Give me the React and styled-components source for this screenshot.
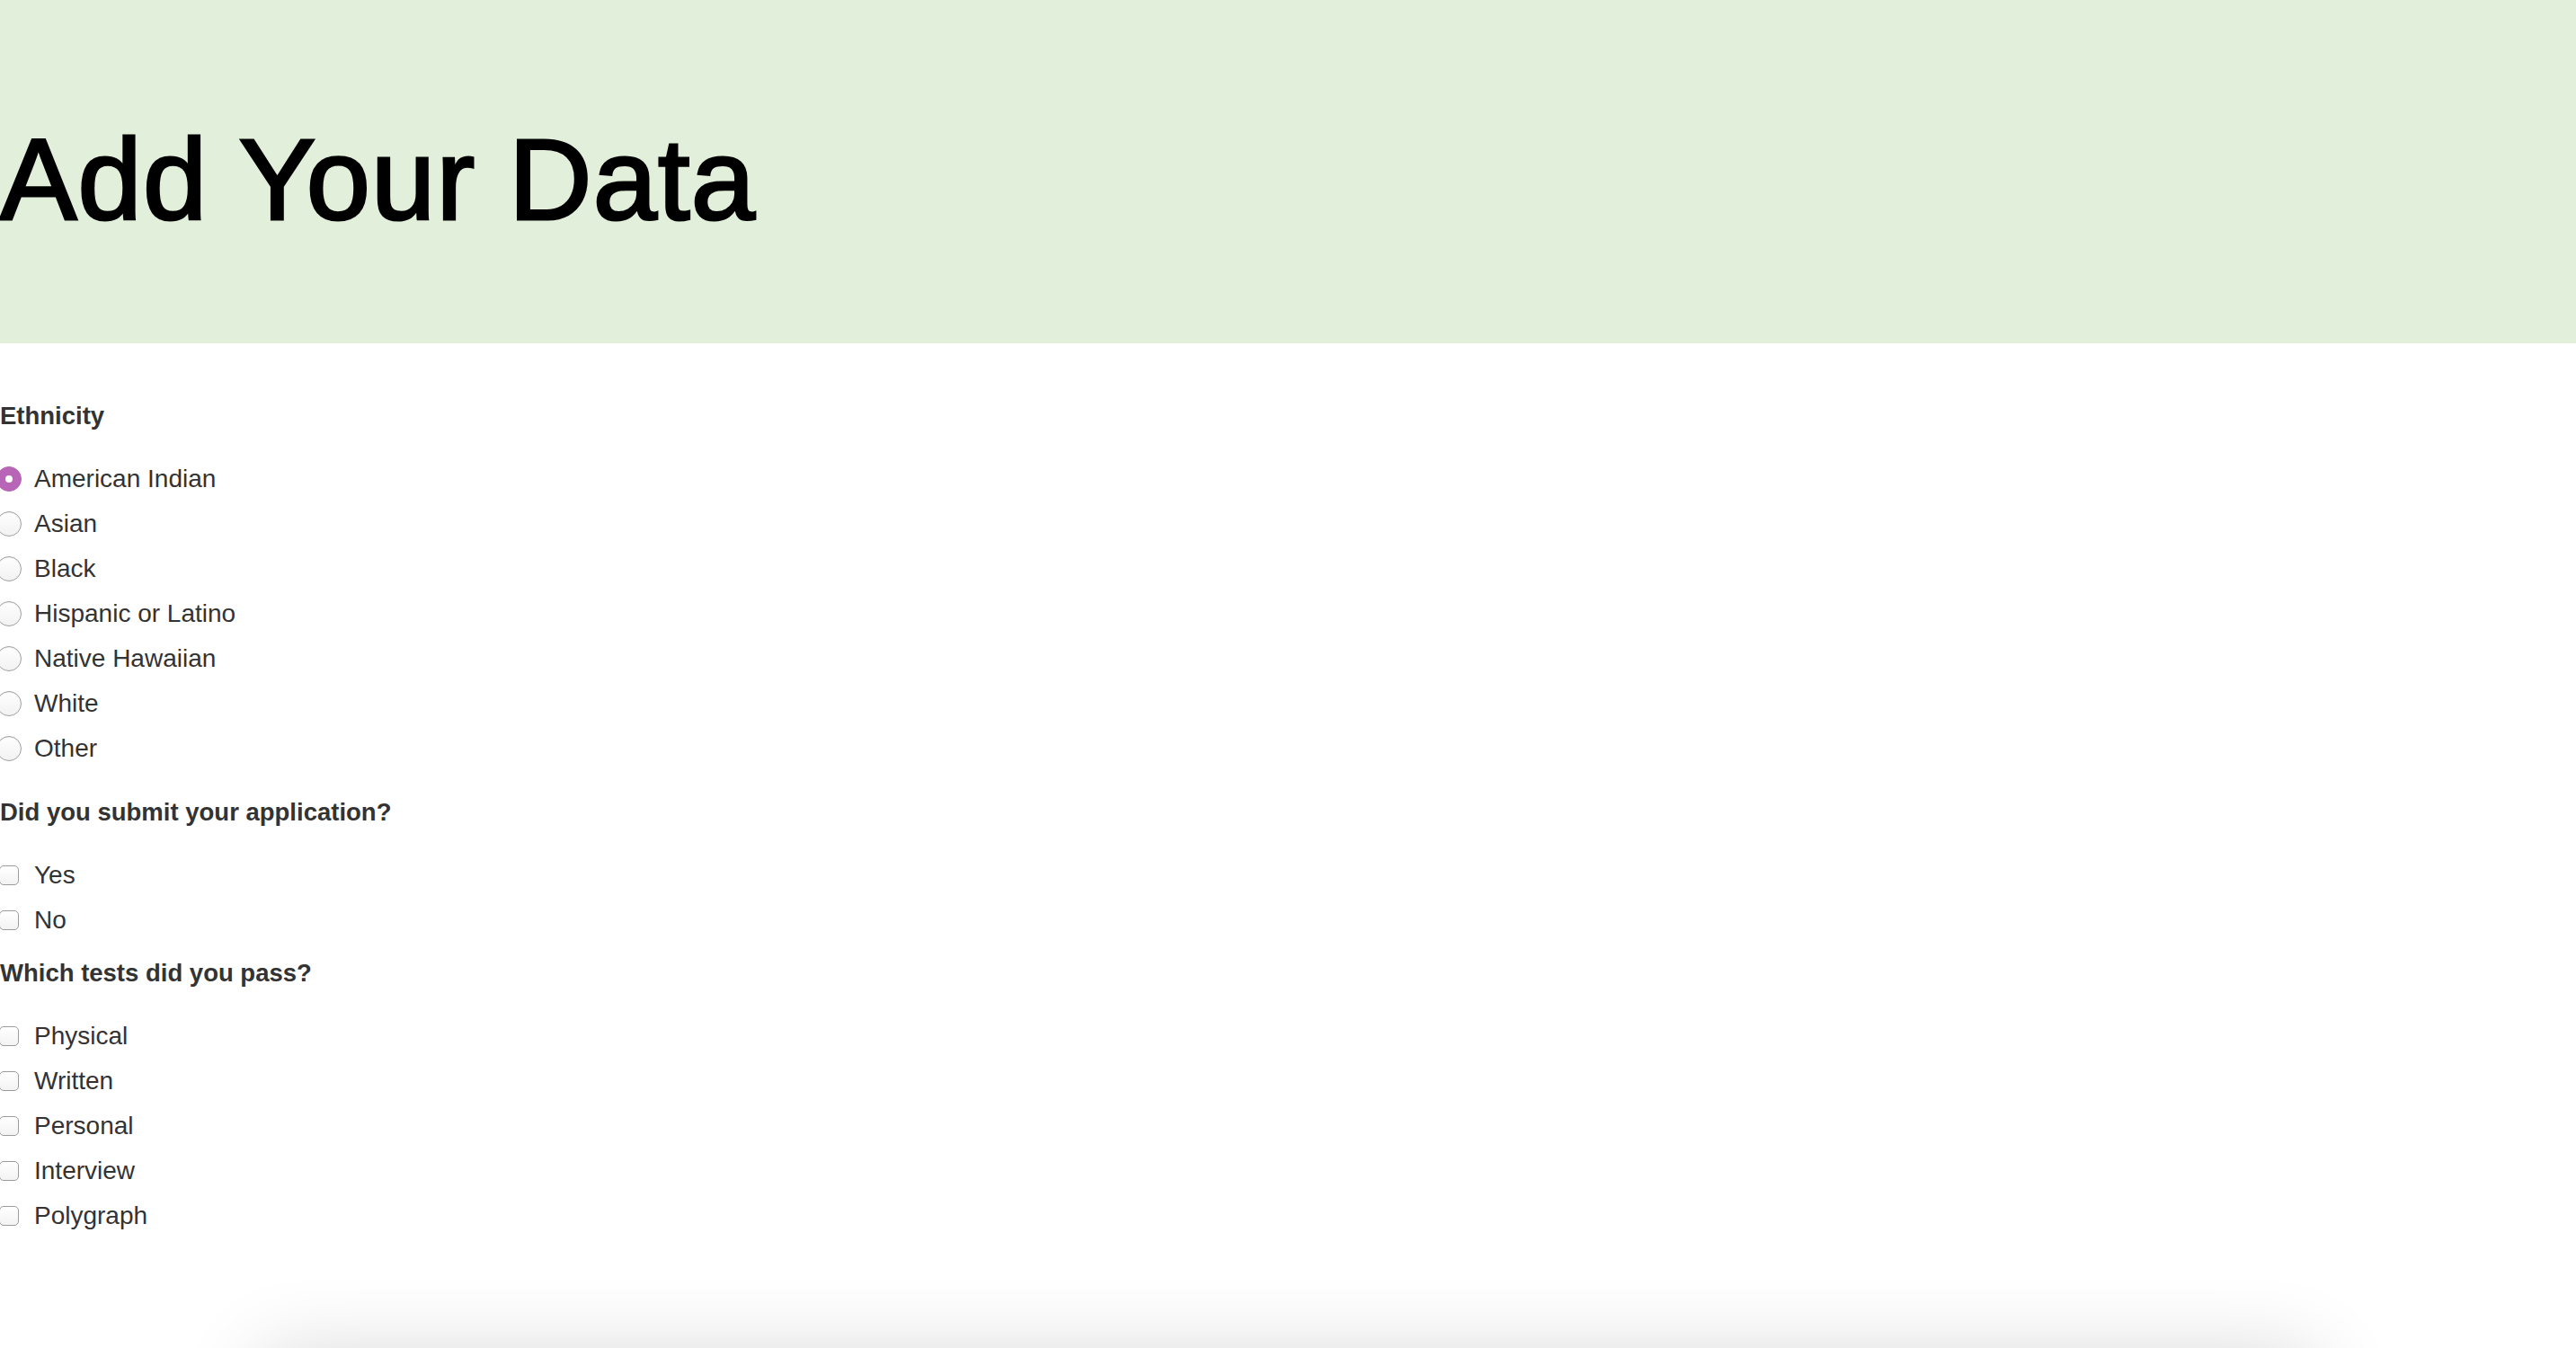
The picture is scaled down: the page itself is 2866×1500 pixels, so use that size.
import React from 'react';
import styled, { createGlobalStyle } from 'styled-components';

const GlobalStyle = createGlobalStyle`
  html, body {
    margin: 0;
    padding: 0;
    background: #fff;
    font-family: "Liberation Sans", Arial, Helvetica, sans-serif;
    overflow-x: hidden;
  }
`;

const Header = styled.header`
  background: #e2efda;
  height: 382px;
  padding-top: 136px;
  box-sizing: border-box;
`;

const Title = styled.h1`
  margin: 0;
  font-size: 128px;
  line-height: 1;
  font-weight: 400;
  color: #000;
  letter-spacing: 1.2px;
  -webkit-text-stroke: 3px #000;
`;

const Form = styled.form`
  padding-top: 61px;
`;

const Group = styled.div`
  margin-bottom: ${(p) => p.$after || 0}px;
`;

const Question = styled.div`
  font-size: 27.5px;
  line-height: 40px;
  font-weight: 700;
  color: #333;
  margin-bottom: 25px;
`;

const Option = styled.label`
  display: flex;
  align-items: center;
  height: 50px;
  font-size: 28px;
  color: #333;
`;

const Radio = styled.span`
  flex: none;
  width: 28px;
  height: 28px;
  margin-left: -4px;
  margin-right: 14px;
  border-radius: 50%;
  box-sizing: border-box;
  display: flex;
  align-items: center;
  justify-content: center;
  background: ${(p) => (p.$checked ? '#b865b8' : 'linear-gradient(#fff, #f2f2f2)')};
  border: 1px solid ${(p) => (p.$checked ? '#b865b8' : '#a0a0a0')};
  box-shadow: ${(p) => (p.$checked ? 'none' : 'inset 0 1px 1px rgba(0,0,0,0.06)')};

  &::after {
    content: '';
    display: ${(p) => (p.$checked ? 'block' : 'none')};
    width: 8px;
    height: 8px;
    border-radius: 50%;
    background: #fff;
  }
`;

const Check = styled.span`
  flex: none;
  width: 22px;
  height: 22px;
  margin-left: -1px;
  margin-right: 17px;
  border-radius: 5px;
  box-sizing: border-box;
  background: linear-gradient(#fff, #f3f3f3);
  border: 1px solid #9c9c9c;
`;

const Card = styled.div`
  width: 2286px;
  height: 400px;
  margin: 129px auto 0;
  background: #fff;
  border-radius: 12px;
  box-shadow: 0 0 90px rgba(0, 0, 0, 0.16);
`;

const ethnicities = [
  'American Indian',
  'Asian',
  'Black',
  'Hispanic or Latino',
  'Native Hawaiian',
  'White',
  'Other',
];

const tests = ['Physical', 'Written', 'Personal', 'Interview', 'Polygraph'];

const App = () => (
  <>
    <GlobalStyle />
    <Header>
      <Title>Add Your Data</Title>
    </Header>
    <Form>
      <Group $after={26}>
        <Question>Ethnicity</Question>
        {ethnicities.map((e, i) => (
          <Option key={e}>
            <Radio $checked={i === 0} />
            {e}
          </Option>
        ))}
      </Group>
      <Group $after={14}>
        <Question>Did you submit your application?</Question>
        {['Yes', 'No'].map((o) => (
          <Option key={o}>
            <Check />
            {o}
          </Option>
        ))}
      </Group>
      <Group>
        <Question>Which tests did you pass?</Question>
        {tests.map((t) => (
          <Option key={t}>
            <Check />
            {t}
          </Option>
        ))}
      </Group>
    </Form>
    <Card />
  </>
);

export default App;
